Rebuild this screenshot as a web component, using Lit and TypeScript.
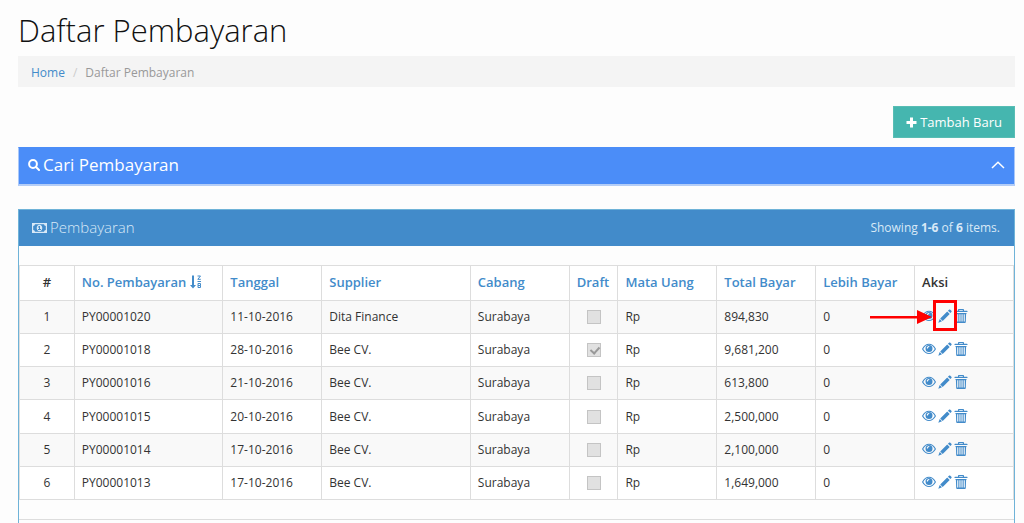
import { LitElement, html, css, svg } from "lit";
import { customElement, state } from "lit/decorators.js";

interface Payment {
  no: string;
  date: string;
  supplier: string;
  branch: string;
  draft: boolean;
  currency: string;
  total: string;
  excess: string;
}

const pay = (no: string, date: string, supplier: string, total: string, draft = false): Payment => ({
  no, date, supplier, branch: "Surabaya", draft, currency: "Rp", total, excess: "0",
});

const PAYMENTS: Payment[] = [
  pay("PY00001020", "11-10-2016", "Dita Finance", "894,830"),
  pay("PY00001018", "28-10-2016", "Bee CV.", "9,681,200", true),
  pay("PY00001016", "21-10-2016", "Bee CV.", "613,800"),
  pay("PY00001015", "20-10-2016", "Bee CV.", "2,500,000"),
  pay("PY00001014", "17-10-2016", "Bee CV.", "2,100,000"),
  pay("PY00001013", "17-10-2016", "Bee CV.", "1,649,000"),
];

const icon = (cls: string, box: string, body: unknown) =>
  html`<svg class="icon ${cls}" viewBox=${box} aria-hidden="true">${body}</svg>`;

const plusIcon = icon("plus", "0 0 11 11", svg`<path d="M4 0.5h3v3.5h3.500v3h-3.500v3.500h-3v-3.500h-3.500v-3h3.500z"/>`);
const searchIcon = icon("search", "0 0 12 12",
  svg`<circle cx="5" cy="5" r="3.900" class="line thick"/><path d="M8 8l3 3" class="line thick round"/>`);
const moneyIcon = icon("money", "0 0 15 10",
  svg`<path fill-rule="evenodd" d="M0 0h15v10H0zM3 1.200A2 2 0 0 1 1.200 3v4A2 2 0 0 1 3 8.800h9A2 2 0 0 1 13.800 7V3A2 2 0 0 1 12 1.200z"/><path fill-rule="evenodd" d="M7.500 1.700c1.700 0 2.800 1.500 2.800 3.300s-1.100 3.300-2.800 3.300S4.700 6.800 4.700 5s1.100-3.300 2.800-3.300zM7.100 3L5.800 4l.6.700.600-.400V6H6v1h3V6H8V3z"/>`);
const chevronIcon = icon("chevron", "0 0 14 8", svg`<path d="M1 7l6-5.800L13 7" class="line"/>`);
const sortIcon = icon("sort", "0 0 12 14",
  svg`<path d="M2 0.500h2v9.500h2L3 13.500 0 10h2z"/><path d="M7.500 1h3L7.800 4.300h3M7.500 6.500h3.500M8 8.500h2.500v2H8zM8 10.500v2h2.500v-2" class="line thin"/>`);
const eyeIcon = icon("act", "0 0 14 14",
  svg`<path d="M.6 7C2.300 3.900 4.400 2.300 7 2.300S11.700 3.900 13.400 7c-1.700 3-3.800 4.500-6.400 4.500S2.300 10 .6 7z" class="line lid"/><path fill-rule="evenodd" d="M7 3a3.500 3.500 0 1 1 0 7 3.500 3.500 0 0 1 0-7zM6.900 3.900C5.700 4 4.900 4.900 4.800 6.100c0 .8 1 .8 1.100 0 .1-.7.500-1.100 1.100-1.200.7-.1.600-1.100-.1-1z"/>`);
const pencilIcon = icon("act", "0 0 14 14",
  svg`<path d="M11 .700c.400-.400.900-.400 1.300 0l1.100 1.100c.400.400.400.900 0 1.300l-1 1L9.900 1.700zM9.200 2.400l2.500 2.500-7 7-2.500-2.500zM1.700 10l2.300 2.300-3.700 1.400z"/>`);
const trashIcon = icon("act", "0 0 14 14",
  svg`<path fill-rule="evenodd" d="M5 0h4c.600 0 1 .400 1 1v.7h3c.300 0 .5.200.5.500V3H.5v-.8c0-.3.200-.5.5-.5h3V1c0-.6.400-1 1-1zm.2.900v.8h3.600V.9z"/><path fill-rule="evenodd" d="M1.500 4h11v.900h-.400L11.800 13c0 .600-.300 1-.900 1H3.100c-.600 0-.9-.4-.9-1L1.900 4.900h-.400zM3.200 5.200v7.400h1.100V5.200zM5.400 5.200v7.400h1.100V5.200zM7.500 5.200v7.400h1.100V5.200zM9.700 5.200v7.400h1.100V5.200z"/>`);

@customElement("app-root")
export class AppRoot extends LitElement {
  @state() private rows = PAYMENTS;

  static styles = css`
    :host {
      display: block;
      font-family: "Open Sans", "Noto Sans", sans-serif;
      font-size: 12px;
      line-height: 17px;
      color: #333;
      background: #fdfdfd;
    }
    * { box-sizing: border-box; }
    a { color: #428bca; text-decoration: none; }
    .page {
      display: flex;
      flex-direction: column;
      min-height: 100vh;
      padding: 10px 9px 0 18px;
    }
    h1 {
      margin: 0;
      font-size: 31px;
      font-weight: 300;
      line-height: 40px;
      color: #111;
    }
    .crumbs {
      display: flex;
      list-style: none;
      margin: 6px 0 0;
      padding: 8px 13px 6px;
      background: #f4f4f4;
      color: #999;
    }
    .crumbs li + li::before { content: "/"; padding: 0 8px; color: #ccc; }
    .toolbar { display: flex; justify-content: flex-end; margin: 19px 0 9px; }
    button { font-family: inherit; cursor: pointer; }
    .add {
      display: flex;
      align-items: center;
      gap: 3px;
      padding: 5px 12px;
      border: 1px solid #58bdb4;
      background: #45b6af;
      color: #fff;
      font-size: 13px;
      line-height: 20px;
    }
    .icon { fill: currentColor; flex: none; }
    .line { fill: none; stroke: currentColor; stroke-width: 1.5; }
    .thick { stroke-width: 2; }
    .thin { stroke-width: 1; }
    .lid { stroke-width: 1.1; }
    .round { stroke-linecap: round; }
    .plus { width: 11px; height: 11px; }
    .search { width: 12px; height: 12px; }
    .money { width: 15px; height: 10px; }
    .chevron { width: 14px; height: 8px; }
    .sort { width: 12px; height: 14px; vertical-align: -2px; }
    .act { display: block; width: 14px; height: 14px; }
    .find {
      display: flex;
      align-items: center;
      gap: 3px;
      width: 100%;
      padding: 6px 9px 8px;
      border: 1px solid #a9c8fa;
      border-top-color: #4b8df8;
      border-bottom: 2px solid #b4cdf6;
      background: #4b8df8;
      color: #fff;
      font-size: 17px;
      line-height: 22px;
      text-align: left;
    }
    .grow { flex: 1; }
    .panel {
      flex: 1;
      margin-top: 23px;
      border: 1px solid #6fb3d8;
      border-bottom: 0;
    }
    .head {
      display: flex;
      align-items: center;
      gap: 3px;
      padding: 7px 14px 8px 13px;
      background: #428bca;
      color: #d9e9f7;
    }
    h2 { flex: 1; margin: 0; font-size: 15px; font-weight: 300; line-height: 21px; }
    table {
      width: 100%;
      height: 235px;
      margin: 19px 0;
      table-layout: fixed;
      border-collapse: collapse;
      background: #fff;
    }
    th, td {
      padding: 7px;
      border: 1px solid #ddd;
      text-align: left;
      white-space: nowrap;
    }
    th { padding: 6px 7px 8px; font-size: 13px; font-weight: 600; line-height: 20px; }
    td { line-height: 18px; }
    tbody tr:nth-child(odd) { background: #f9f9f9; }
    .mid { text-align: center; }
    .c5 { width: 4.9%; }
    .c10 { width: 9.95%; }
    .c15 { width: 14.95%; }
    .tick {
      appearance: none;
      display: block;
      width: 14px;
      height: 14px;
      margin: 0 auto;
      border: 1px solid #c4c4c4;
      background: #e1e1e1;
    }
    .tick:checked::before {
      content: "";
      display: block;
      width: 4px;
      height: 7px;
      margin: 1px 0 0 4px;
      border: solid #999;
      border-width: 0 2px 2px 0;
      transform: rotate(42deg);
    }
    .acts { display: flex; gap: 2px; padding-bottom: 2px; }
    .edit { position: relative; }
    .ring {
      position: absolute;
      inset: -9px -5px -8px -5px;
      border: 3px solid #f00;
    }
    .arrow {
      position: absolute;
      top: 1px;
      right: 20px;
      width: 62px;
      height: 14px;
      fill: #f00;
    }
    .foot { height: 20px; border-top: 1px solid #ddd; }
  `;

  private row(p: Payment, i: number) {
    return html`<tr>
      <td class="mid">${i + 1}</td>
      <td>${p.no}</td>
      <td>${p.date}</td>
      <td>${p.supplier}</td>
      <td>${p.branch}</td>
      <td><input class="tick" type="checkbox" aria-label="Draft ${p.no}" disabled .checked=${p.draft}></td>
      <td>${p.currency}</td>
      <td>${p.total}</td>
      <td>${p.excess}</td>
      <td>
        <div class="acts">
          <a href="#" aria-label="View">${eyeIcon}</a>
          <a href="#" class="edit" aria-label="Edit">${pencilIcon}${i === 0
            ? html`<span class="ring"></span>
                <svg class="arrow" viewBox="0 0 62 14" aria-hidden="true"><path d="M0 6h47V0l15 7-15 7V8.500H0z"/></svg>`
            : ""}</a>
          <a href="#" aria-label="Delete">${trashIcon}</a>
        </div>
      </td>
    </tr>`;
  }

  render() {
    const link = (t: string) => html`<a href="#">${t}</a>`;
    return html`<main class="page">
      <h1>Daftar Pembayaran</h1>
      <nav aria-label="Breadcrumb">
        <ol class="crumbs"><li><a href="#">Home</a></li><li>Daftar Pembayaran</li></ol>
      </nav>
      <div class="toolbar"><button class="add">${plusIcon}Tambah Baru</button></div>
      <button class="find">${searchIcon}<span class="grow">Cari Pembayaran</span>${chevronIcon}</button>
      <section class="panel">
        <div class="head">
          ${moneyIcon}
          <h2>Pembayaran</h2>
          <span>Showing <b>1-6</b> of <b>6</b> items.</span>
        </div>
        <table>
          <colgroup>
            <col><col class="c15"><col class="c10"><col class="c15"><col class="c10">
            <col class="c5"><col class="c10"><col class="c10"><col class="c10"><col class="c10">
          </colgroup>
          <thead>
            <tr>
              <th class="mid">#</th>
              <th><a href="#">No. Pembayaran ${sortIcon}</a></th>
              <th>${link("Tanggal")}</th>
              <th>${link("Supplier")}</th>
              <th>${link("Cabang")}</th>
              <th>${link("Draft")}</th>
              <th>${link("Mata Uang")}</th>
              <th>${link("Total Bayar")}</th>
              <th>${link("Lebih Bayar")}</th>
              <th>Aksi</th>
            </tr>
          </thead>
          <tbody>${this.rows.map((p, i) => this.row(p, i))}</tbody>
        </table>
        <div class="foot"></div>
      </section>
    </main>`;
  }
}
